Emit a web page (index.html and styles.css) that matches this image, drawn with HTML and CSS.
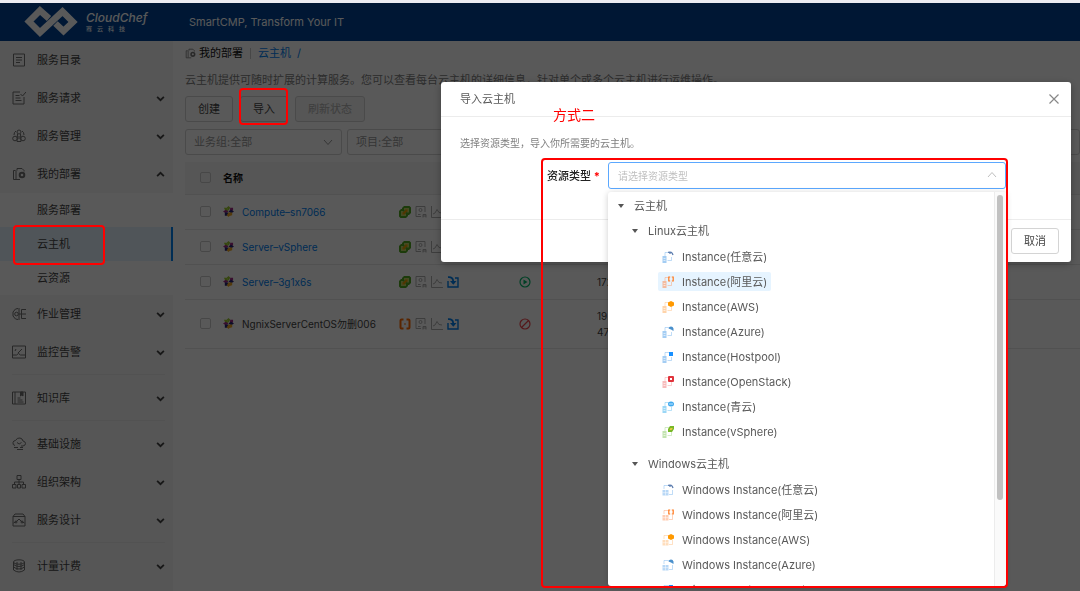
FILE: index.html
```html
<!DOCTYPE html>
<html lang="zh-CN">
<head>
    <meta charset="UTF-8">
    <meta name="viewport" content="width=device-width, initial-scale=1.0">
    <title>云主机 - SmartCMP</title>
    <link rel="stylesheet" href="styles.css">
</head>
<body>
    <svg class="sprite" aria-hidden="true">
        <symbol id="chevron" viewBox="0 0 8 8"><path d="M1 2.500l3 3 3-3" fill="none" stroke="currentColor" stroke-width="1.600"/></symbol>
        <symbol id="arrow" viewBox="0 0 10 10"><path d="M1 3l4 4.500 4-4.500" fill="none" stroke="currentColor"/></symbol>
        <symbol id="deploy" viewBox="0 0 14 14"><g fill="none" stroke="currentColor"><path d="M8 12.500H1.500v-9h2M4 3.500V12M5 3.500v-2h5l2 2v1"/><circle cx="10" cy="8" r="2.300" stroke-width="2"/></g></symbol>
        <symbol id="vsphere" viewBox="0 0 12 12"><path d="M5 0h5.500L12 1.500V7l-2 2H9v1l-2 2H1.500L0 10.500V5l2-2h1V2z" fill="#52a820"/><path d="M5 2h5v4.500H7.500V4.500H5zM2 5h2.500v2.500H7V10H2z" fill="#c4d468"/><path d="M6.200 3.500h2.300v2.300H6.200zM3.500 6.200h2.300v2.300H3.500zM5 5h2v2H5z" fill="#ee9c00"/></symbol>
        <symbol id="aliyun" viewBox="0 0 12 12"><path d="M4.500 1.500H2.500q-1 0-1 1v7q0 1 1 1h2M7.500 1.500h2q1 0 1 1v7q0 1-1 1h-2" fill="none" stroke="#ff6a00" stroke-width="2"/><path d="M5 6h2" stroke="#ff6a00"/></symbol>
        <symbol id="agent" viewBox="0 0 12 12"><g fill="none" stroke="#a6a6a6" stroke-width=".9"><path d="M6 10.500H1v-10h9V6"/><circle cx="5.500" cy="4" r="1.500"/><path d="M3 8.500h2.500M8 11.500v-3h3v3M8 10h3"/></g></symbol>
        <symbol id="chart" viewBox="0 0 12 12"><path d="M.5 0v11.500H12M2 8l2-1 2-3.500 2 3 3 .5" fill="none" stroke="#a6a6a6" stroke-width=".9"/></symbol>
        <symbol id="import" viewBox="0 0 12 12"><path d="M1 5v6h10V2H8" fill="none" stroke="#0080f0" stroke-width="1.400"/><path d="M1 1.200q5-.5 5.200 4" fill="none" stroke="#0080f0" stroke-width="1.800"/><path d="M3 5h6.500L6.300 8.800z" fill="#0080f0"/></symbol>
        <symbol id="centos" viewBox="0 0 12 12"><path d="M6 0l2 2-2 3-2-3z" fill="#9bc832"/><path d="M1 2h3l2 3-3 1z" fill="#9ccd2a"/><path d="M8 2h3v3L7 6z" fill="#a02b84"/><path d="M0 6l3-2 3 2-3 2z" fill="#a02b84"/><path d="M12 6L9 4 6 6l3 2z" fill="#262577"/><path d="M2 7l4 0-1 3.500H2z" fill="#262577"/><path d="M6 7h4v3l-3 1z" fill="#efa724"/><path d="M6 12l-2-2 2-3 2 3z" fill="#efa724"/></symbol>
        <symbol id="instance" viewBox="0 0 12 12"><path d="M3 5V1.500h4M5.500 9.500h4V6" fill="none" stroke="currentColor" opacity=".35"/><path d="M.5 5h4v7h-4z" fill="currentColor" opacity=".5"/><path d="M1.500 7.500h2M1.500 9.500h2" stroke="#fff" stroke-width=".6"/></symbol>
        <symbol id="win-instance" viewBox="0 0 12 12"><path d="M2 5V1.500h5M7 10.500h3.500V6" fill="none" stroke="currentColor" opacity=".35"/><path d="M.5 6h6v5.500h-6z" fill="currentColor" opacity=".4"/><path d="M3.500 6v5.500M.5 8.700h6" stroke="#fff" stroke-width=".5"/></symbol>
        <symbol id="b-any" viewBox="0 0 6 6"><path d="M0 1.500q4-1.500 5 2.500M2 1v2" fill="none" stroke="#5f7fb0" stroke-width="1.300"/></symbol>
        <symbol id="b-ali" viewBox="0 0 6 6"><path d="M2.200 1H.8v4h1.400M3.800 1h1.400v4H3.800" fill="none" stroke="#ff7a20" stroke-width="1.200"/></symbol>
        <symbol id="b-aws" viewBox="0 0 6 6"><path d="M3 0l3 1.500v3L3 6 0 4.500v-3z" fill="#f90"/></symbol>
        <symbol id="b-azure" viewBox="0 0 6 6"><path d="M.5 2.500Q1 .5 3 .5q2 0 2.500 2V5L3 3.500z" fill="#4a90cc"/></symbol>
        <symbol id="b-host" viewBox="0 0 6 6"><rect x="1" y="1" width="4" height="4" fill="#1890ff"/></symbol>
        <symbol id="b-open" viewBox="0 0 6 6"><rect width="6" height="6" rx="1" fill="#e0343c"/><rect x="2" y="2" width="2" height="2" fill="#fff"/></symbol>
        <symbol id="b-qing" viewBox="0 0 6 6"><ellipse cx="3" cy="3" rx="3" ry="2.500" fill="#3fa9ee"/><path d="M1 3h4" stroke="#bfe4ff"/></symbol>
        <symbol id="b-vs" viewBox="0 0 6 6"><path d="M2 0h4v3L4 6H0V3z" fill="#78b828"/><path d="M2.500 2h2v1l-1 1h-2z" fill="#eaca40"/></symbol>
    </svg>

    <div class="app">
        <header class="header">
            <a class="brand" href="#">
                <svg class="brand-mark" viewBox="0 0 54 34"><path d="M25 13.500L16 5.500 5 16.500l11 11L38.500 6.500 49 17l-9.500 9-8-7.500" fill="none" stroke="#fff" stroke-width="6.500"/></svg>
                <span class="brand-name">CloudChef<small>骞云科技</small></span>
            </a>
            <span class="slogan">SmartCMP, Transform Your IT</span>
        </header>

        <div class="layout">
            <nav class="sidebar">
                <a class="nav-item" href="#"><svg viewBox="0 0 14 14"><path d="M1.500 1h11v12h-11zM4 4.500h6M4 7h6M4 9.500h4"/></svg>服务目录</a>
                <a class="nav-item" href="#"><svg viewBox="0 0 14 14"><path d="M8 1H1v12h11V6M3.500 4.500h4M3.500 7h5M3.500 9.500h6M8.500 3l2 2L14 1"/></svg>服务请求<svg class="caret"><use href="#chevron"/></svg></a>
                <a class="nav-item" href="#"><svg viewBox="0 0 14 14"><circle cx="7" cy="3" r="2"/><circle cx="3" cy="9.500" r="2.300"/><circle cx="11" cy="9.500" r="2.300"/><path d="M5.500 5L5 12.500h4L8.500 5M7 7v3M2 6q0-3 2-4M12 6q0-3-2-4"/></svg>服务管理<svg class="caret"><use href="#chevron"/></svg></a>
                <a class="nav-item" href="#"><svg><use href="#deploy"/></svg>我的部署<svg class="caret up"><use href="#chevron"/></svg></a>
                <div class="subnav">
                    <a href="#">服务部署</a>
                    <a class="active" href="#">云主机</a>
                    <a href="#">云资源</a>
                </div>
                <a class="nav-item" href="#"><svg viewBox="0 0 14 14"><path d="M6 1.500L3.500 2 1 5v4l2.500 3 2.500.500M7 1v12M7 7h3M9.500 2.500v9M9.500 2.500H14M10 7h4M9.500 11.500H14"/><circle cx="4.500" cy="7" r="1.800"/></svg>作业管理<svg class="caret"><use href="#chevron"/></svg></a>
                <a class="nav-item" href="#"><svg viewBox="0 0 14 14"><path d="M.5 1h13v12H.5zM.5 10h4l2-1.500 2 1.500h5M6 8l4-4M3 6l1-2"/></svg>监控告警<svg class="caret"><use href="#chevron"/></svg></a>
                <hr>
                <a class="nav-item" href="#"><svg viewBox="0 0 14 14"><path d="M.5 1h13v12H.5zM3 1v12M5.500 7h3M5.500 9h5M5.500 11h6"/><path d="M8.500 1h2.500v4L9.800 4 8.500 5z" fill="currentColor"/></svg>知识库<svg class="caret"><use href="#chevron"/></svg></a>
                <hr>
                <a class="nav-item" href="#"><svg viewBox="0 0 14 14"><path d="M3 8.500Q.5 8 1 5.500q.5-2 2.500-2Q5 .5 8 1q2.500.5 3 3 2.500.5 2.500 2.500T11 9H9M5 5.500q2 3 4.500 0M2 10.500h4M5 12.500h6M8 10.500h3"/></svg>基础设施<svg class="caret"><use href="#chevron"/></svg></a>
                <a class="nav-item" href="#"><svg viewBox="0 0 14 14"><path d="M5 .5h4v4H5zM7 4.500v5M2.500 9.500V7h9v2.500M.5 9.500h3.500V13H.5zM5.500 9.500h3V13h-3zM10 9.500h3.500V13H10z"/></svg>组织架构<svg class="caret"><use href="#chevron"/></svg></a>
                <a class="nav-item" href="#"><svg viewBox="0 0 14 14"><path d="M1 3.500h12V13H1zM1 3.500L3 1h8l2 2.500M1.500 10l3-1.500L7 6l2.500 2.500 3 1.500"/><circle cx="4" cy="9" r="1"/><circle cx="10" cy="9" r="1"/></svg>服务设计<svg class="caret"><use href="#chevron"/></svg></a>
                <hr>
                <a class="nav-item" href="#"><svg viewBox="0 0 14 14"><ellipse cx="7" cy="3" rx="5.500" ry="2.200"/><path d="M1.500 3v8q5.500 4 11 0V3M1.500 5.500q5.500 4 11 0M1.500 8q5.500 4 11 0M5 3v8M9 3v8"/></svg>计量计费<svg class="caret"><use href="#chevron"/></svg></a>
            </nav>

            <main class="main">
                <div class="breadcrumb">
                    <svg><use href="#deploy"/></svg>
                    <span>我的部署</span>
                    <i></i>
                    <a href="#">云主机</a>
                    <a href="#">/</a>
                </div>
                <p class="desc">云主机提供可随时扩展的计算服务。您可以查看每台云主机的详细信息，针对单个或多个云主机进行运维操作。</p>
                <div class="toolbar">
                    <button class="btn" type="button">创建</button>
                    <button class="btn" type="button">导入</button>
                    <button class="btn" type="button" disabled>刷新状态</button>
                </div>
                <div class="filters">
                    <div class="filter">
                        <select aria-label="业务组"><option>业务组:全部</option></select>
                        <svg><use href="#arrow"/></svg>
                    </div>
                    <div class="filter">
                        <select aria-label="项目"><option>项目:全部</option></select>
                        <svg><use href="#arrow"/></svg>
                    </div>
                    <input class="search" type="text" aria-label="搜索">
                </div>
                <table class="vm-table">
                    <thead>
                        <tr>
                            <th class="col-check"><input type="checkbox" aria-label="全选"></th>
                            <th class="col-name">名称</th>
                            <th class="col-icons"></th>
                            <th class="col-status"></th>
                            <th></th>
                        </tr>
                    </thead>
                    <tbody>
                        <tr>
                            <td><input type="checkbox" aria-label="Compute-sn7066"></td>
                            <td><div class="vm-name"><svg><use href="#centos"/></svg><a href="#">Compute–sn7066</a></div></td>
                            <td><div class="vm-icons"><svg><use href="#vsphere"/></svg><svg><use href="#agent"/></svg><svg><use href="#chart"/></svg></div></td>
                            <td></td>
                            <td></td>
                        </tr>
                        <tr>
                            <td><input type="checkbox" aria-label="Server-vSphere"></td>
                            <td><div class="vm-name"><svg><use href="#centos"/></svg><a href="#">Server–vSphere</a></div></td>
                            <td><div class="vm-icons"><svg><use href="#vsphere"/></svg><svg><use href="#agent"/></svg><svg><use href="#chart"/></svg></div></td>
                            <td></td>
                            <td></td>
                        </tr>
                        <tr>
                            <td><input type="checkbox" aria-label="Server-3g1x6s"></td>
                            <td><div class="vm-name"><svg><use href="#centos"/></svg><a href="#">Server–3g1x6s</a></div></td>
                            <td><div class="vm-icons"><svg><use href="#vsphere"/></svg><svg><use href="#agent"/></svg><svg><use href="#chart"/></svg><svg><use href="#import"/></svg></div></td>
                            <td><svg class="status" viewBox="0 0 12 12"><circle cx="6" cy="6" r="5" fill="none" stroke="#00b86b" stroke-width="1.200"/><path d="M4.500 3.500L8.500 6l-4 2.500z" fill="#00b86b"/></svg></td>
                            <td>172</td>
                        </tr>
                        <tr class="tall">
                            <td><input type="checkbox" aria-label="NgnixServerCentOS勿删006"></td>
                            <td><div class="vm-name"><svg><use href="#centos"/></svg>NgnixServerCentOS勿删006</div></td>
                            <td><div class="vm-icons"><svg><use href="#aliyun"/></svg><svg><use href="#agent"/></svg><svg><use href="#chart"/></svg><svg><use href="#import"/></svg></div></td>
                            <td><svg class="status" viewBox="0 0 12 12"><circle cx="6" cy="6" r="5" fill="none" stroke="#f0474f" stroke-width="1.200"/><path d="M2.500 9.500l7-7" stroke="#f0474f" stroke-width="1.200"/></svg></td>
                            <td>19<br>47</td>
                        </tr>
                    </tbody>
                </table>
            </main>
        </div>
    </div>

    <div class="mask"></div>

    <section class="modal" role="dialog" aria-labelledby="modal-title">
        <div class="modal-header">
            <h2 id="modal-title">导入云主机</h2>
            <button class="close" type="button" aria-label="关闭"><svg viewBox="0 0 10 10"><path d="M.5.5l9 9M9.500.5l-9 9" stroke="currentColor" stroke-width="1.200"/></svg></button>
        </div>
        <div class="modal-body">
            <p>选择资源类型，导入你所需要的云主机。</p>
            <div class="form-row">
                <label for="resource-type">资源类型 <b>*</b></label>
                <div class="tree-select">
                    <input type="text" id="resource-type" placeholder="请选择资源类型">
                    <svg class="tree-arrow"><use href="#arrow"/></svg>
                    <div class="dropdown">
                        <ul class="tree">
                            <li><span class="node"><i class="toggle"></i>云主机</span>
                                <ul>
                                    <li><span class="node"><i class="toggle"></i>Linux云主机</span>
                                        <ul>
                                            <li><a class="leaf" href="#"><svg class="blue" viewBox="0 0 12 12"><use href="#instance"/><use href="#b-any" x="6" width="6" height="6"/></svg>Instance(任意云)</a></li>
                                            <li><a class="leaf selected" href="#"><svg class="orange" viewBox="0 0 12 12"><use href="#instance"/><use href="#b-ali" x="6" width="6" height="6"/></svg>Instance(阿里云)</a></li>
                                            <li><a class="leaf" href="#"><svg class="amber" viewBox="0 0 12 12"><use href="#instance"/><use href="#b-aws" x="6" width="6" height="6"/></svg>Instance(AWS)</a></li>
                                            <li><a class="leaf" href="#"><svg class="blue" viewBox="0 0 12 12"><use href="#instance"/><use href="#b-azure" x="6" width="6" height="6"/></svg>Instance(Azure)</a></li>
                                            <li><a class="leaf" href="#"><svg class="blue" viewBox="0 0 12 12"><use href="#instance"/><use href="#b-host" x="6" width="6" height="6"/></svg>Instance(Hostpool)</a></li>
                                            <li><a class="leaf" href="#"><svg class="red" viewBox="0 0 12 12"><use href="#instance"/><use href="#b-open" x="6" width="6" height="6"/></svg>Instance(OpenStack)</a></li>
                                            <li><a class="leaf" href="#"><svg class="sky" viewBox="0 0 12 12"><use href="#instance"/><use href="#b-qing" x="6" width="6" height="6"/></svg>Instance(青云)</a></li>
                                            <li><a class="leaf" href="#"><svg class="green" viewBox="0 0 12 12"><use href="#instance"/><use href="#b-vs" x="6" width="6" height="6"/></svg>Instance(vSphere)</a></li>
                                        </ul>
                                    </li>
                                    <li><span class="node"><i class="toggle"></i>Windows云主机</span>
                                        <ul>
                                            <li><a class="leaf" href="#"><svg class="blue" viewBox="0 0 12 12"><use href="#win-instance"/><use href="#b-any" x="6" width="6" height="6"/></svg>Windows Instance(任意云)</a></li>
                                            <li><a class="leaf" href="#"><svg class="orange" viewBox="0 0 12 12"><use href="#win-instance"/><use href="#b-ali" x="6" width="6" height="6"/></svg>Windows Instance(阿里云)</a></li>
                                            <li><a class="leaf" href="#"><svg class="amber" viewBox="0 0 12 12"><use href="#win-instance"/><use href="#b-aws" x="6" width="6" height="6"/></svg>Windows Instance(AWS)</a></li>
                                            <li><a class="leaf" href="#"><svg class="blue" viewBox="0 0 12 12"><use href="#win-instance"/><use href="#b-azure" x="6" width="6" height="6"/></svg>Windows Instance(Azure)</a></li>
                                            <li><a class="leaf" href="#"><svg class="blue" viewBox="0 0 12 12"><use href="#win-instance"/><use href="#b-host" x="6" width="6" height="6"/></svg>Windows Instance(Hostpool)</a></li>
                                        </ul>
                                    </li>
                                </ul>
                            </li>
                        </ul>
                        <div class="scrollbar"><div class="thumb"></div></div>
                    </div>
                </div>
            </div>
        </div>
        <div class="modal-footer">
            <button class="btn" type="button">取消</button>
        </div>
    </section>

    <div class="mark mark-import"></div>
    <div class="mark mark-nav"></div>
    <div class="mark mark-select"></div>
    <div class="mark-text">方式二</div>
</body>
</html>
```

FILE: styles.css
```css
* { margin: 0; padding: 0; box-sizing: border-box; }
body {
    font-family: Inter, "Noto Sans CJK SC", sans-serif;
    font-feature-settings: "calt" 0;
    font-size: 11px;
    line-height: 16px;
    color: #444;
    background: #ececf2;
    padding-top: 3px;
    height: 100vh;
    overflow: hidden;
}
a { color: inherit; text-decoration: none; }
ul { list-style: none; }
button, input, select { font: inherit; color: inherit; }
.sprite { position: absolute; width: 0; height: 0; }

.app {
    display: flex;
    flex-direction: column;
    height: 100%;
    background: #fff;
}
.header {
    display: flex;
    align-items: center;
    height: 38px;
    flex-shrink: 0;
    padding-left: 24px;
    background: #004496;
    color: #fff;
}
.brand {
    display: flex;
    align-items: center;
    gap: 8px;
    width: 165px;
}
.brand-mark { width: 54px; height: 34px; }
.brand-name {
    font-size: 12px;
    line-height: 14px;
    font-style: italic;
    font-weight: 500;
}
.brand-name small {
    display: block;
    font-size: 6px;
    line-height: 8px;
    font-style: normal;
    letter-spacing: 5px;
}

.layout { display: flex; flex: 1; min-height: 0; }
.sidebar {
    width: 173px;
    flex-shrink: 0;
    background: #f7f7f7;
}
.nav-item {
    display: flex;
    align-items: center;
    gap: 11px;
    height: 38px;
    padding: 0 8px 0 12px;
}
.nav-item svg {
    width: 14px;
    height: 14px;
    fill: none;
    stroke: currentColor;
    stroke-width: 1;
    opacity: .75;
}
.nav-item .caret {
    width: 9px;
    height: 9px;
    margin-left: auto;
    opacity: 1;
}
.caret.up { transform: rotate(180deg); }
.subnav { background: #fff; }
.subnav a {
    display: block;
    line-height: 34px;
    padding-left: 37px;
}
.subnav .active {
    background: #e6f4ff;
    border-right: 2px solid #0080f0;
}
.sidebar hr {
    border: 0;
    border-top: 1px solid #ececec;
    margin: 3px 8px 4px 12px;
}

.main { flex: 1; min-width: 0; padding-left: 12px; }
.breadcrumb {
    display: flex;
    align-items: center;
    gap: 3px;
    height: 24px;
    color: #111;
}
.breadcrumb svg { width: 11px; height: 11px; color: #777; }
.breadcrumb i { width: 1px; height: 11px; margin: 0 4px; background: #ccc; }
.breadcrumb a { color: #0080f0; margin-right: 3px; }
.desc {
    line-height: 30px;
    color: #808080;
    white-space: nowrap;
}
.toolbar { display: flex; gap: 7px; padding-top: 1px; }
.btn {
    height: 26px;
    padding: 0 12px;
    border: 1px solid #d4d4d4;
    border-radius: 3px;
    background: #fff;
    color: #444;
}
.btn:disabled { background: #f5f5f5; color: #b0b0b0; }
.filters { display: flex; gap: 5px; padding: 7px 0; }
.filter { position: relative; width: 157px; }
.filter select, .search {
    width: 100%;
    height: 26px;
    padding: 0 8px;
    border: 1px solid #d4d4d4;
    border-radius: 3px;
    background: #fff;
    color: #999;
    appearance: none;
}
.filter svg {
    position: absolute;
    right: 9px;
    top: 8px;
    width: 10px;
    height: 10px;
    color: #999;
}
.search { flex: 1; }

.vm-table {
    width: 100%;
    table-layout: fixed;
    border-collapse: collapse;
    font-size: 10px;
}
.vm-table th {
    height: 32px;
    text-align: left;
    font-weight: 600;
    color: #111;
    background: #f5f5f5;
}
.vm-table td { height: 35px; }
.vm-table .tall td { height: 49px; }
.vm-table tr { border-bottom: 1px solid #e8e8e8; }
.col-check { width: 38px; }
.col-name { width: 176px; }
.col-icons { width: 120px; }
.col-status { width: 78px; }
.vm-table input {
    display: block;
    width: 11px;
    height: 11px;
    margin-left: 15px;
    appearance: none;
    border: 1px solid #ccc;
    border-radius: 2px;
}
.vm-name { display: flex; align-items: center; gap: 8px; }
.vm-name svg { width: 11px; height: 11px; }
.vm-name a { color: #0080f0; }
.vm-icons { display: flex; gap: 4px; }
.vm-icons svg { width: 12px; height: 12px; }
.status { display: block; width: 12px; height: 12px; }

.mask {
    position: fixed;
    inset: 3px 0 0;
    background: rgba(0, 0, 0, .65);
}

.modal {
    position: fixed;
    top: 82px;
    right: 9px;
    left: 441px;
    background: #fff;
    border-radius: 3px;
    box-shadow: 0 2px 8px rgba(0, 0, 0, .3);
    color: #595959;
}
.modal-header {
    display: flex;
    align-items: center;
    justify-content: space-between;
    height: 35px;
    padding: 0 12px 0 19px;
    border-bottom: 1px solid #ececec;
}
.modal-header h2 { font-size: 11px; font-weight: 400; }
.close {
    width: 10px;
    height: 10px;
    border: 0;
    background: none;
    color: #888;
}
.close svg { display: block; }
.modal-body { height: 102px; padding: 18px 65px 0 19px; }
.modal-body p {
    font-size: 10px;
    color: #808080;
}
.form-row {
    display: flex;
    align-items: center;
    padding-top: 11px;
}
.form-row label {
    width: 148px;
    padding-right: 8px;
    text-align: right;
    font-weight: 500;
    color: #222;
}
.form-row b { color: #f00; }
.tree-select { position: relative; flex: 1; }
.tree-select input {
    display: block;
    width: 100%;
    height: 27px;
    padding: 0 9px;
    border: 1px solid #5ba8ff;
    border-radius: 3px;
    outline: none;
    font-size: 10px;
}
.tree-select input::placeholder { color: #bfbfbf; }
.tree-arrow {
    position: absolute;
    right: 9px;
    top: 8px;
    width: 10px;
    height: 10px;
    color: #bfbfbf;
    transform: rotate(180deg);
}
.dropdown {
    position: absolute;
    top: 30px;
    left: 0;
    right: 0;
    display: flex;
    height: 394px;
    overflow: hidden;
    background: #fff;
    border-radius: 3px;
    box-shadow: 0 1px 6px rgba(0, 0, 0, .2);
}
.tree { flex: 1; padding-top: 1px; }
.tree ul { padding: 1px 0 7px 14px; }
.tree > li > ul { padding-top: 0; }
.node {
    display: flex;
    align-items: center;
    gap: 10px;
    height: 25px;
    padding-left: 10px;
}
.toggle {
    border: 3px solid transparent;
    border-top: 4px solid #555;
    border-bottom: 0;
}
.leaf {
    display: inline-flex;
    align-items: center;
    gap: 8px;
    height: 19px;
    margin: 3px 0 3px 22px;
    padding: 0 4px;
    border-radius: 2px;
}
.tree li { display: block; }
.tree li li li { height: 25px; }
.leaf svg { width: 12px; height: 12px; }
.selected { background: #e6f4ff; }
.blue { color: #4a9be8; }
.sky { color: #38b0ee; }
.orange { color: #ff8240; }
.amber { color: #ffaa55; }
.red { color: #f07878; }
.green { color: #85c860; }
.scrollbar {
    width: 12px;
    padding: 3px 3px 0 2px;
    border-left: 1px solid #ececec;
    background: #fafafa;
}
.thumb {
    height: 305px;
    border-radius: 3px;
    background: #c1c1c1;
}
.modal-footer {
    display: flex;
    justify-content: flex-end;
    padding: 8px 12px;
    border-top: 1px solid #ececec;
}

/* red callouts drawn over the screen */
.mark {
    position: fixed;
    border: 2px solid #f00;
    border-radius: 4px;
}
.mark-import { left: 239px; top: 88px; width: 49px; height: 37px; }
.mark-nav { left: 13px; top: 225px; width: 92px; height: 40px; }
.mark-select { left: 541px; top: 158px; width: 467px; height: 430px; }
.mark-text {
    position: fixed;
    left: 553px;
    top: 107px;
    font-size: 14px;
    color: #f00;
}
```
